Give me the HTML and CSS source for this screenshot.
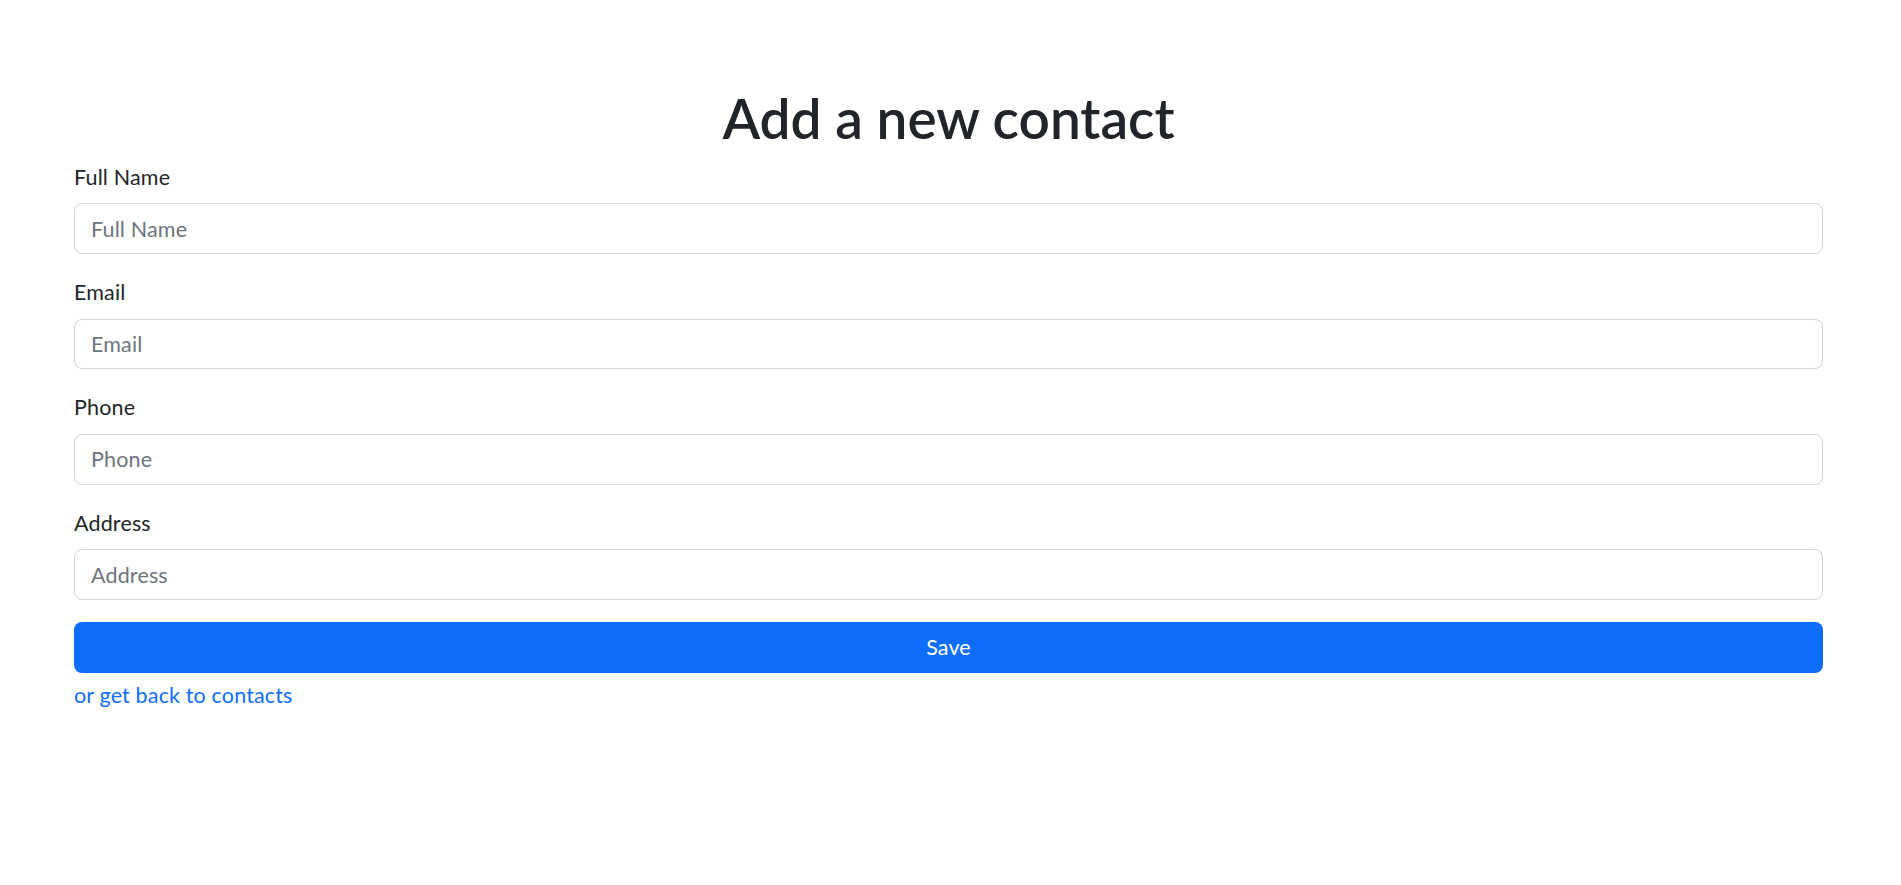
FILE: index.html
```html
<!DOCTYPE html>
<html lang="en">
<head>
<meta charset="utf-8">
<title>Add a new contact</title>
<link rel="stylesheet" href="styles.css">
</head>
<body>
<main class="page">
  <h1 class="title">Add a new contact</h1>
  <form class="form">
    <div class="group">
      <label class="label" for="name">Full Name</label>
      <input class="input" id="name" type="text" placeholder="Full Name">
    </div>
    <div class="group">
      <label class="label" for="email">Email</label>
      <input class="input" id="email" type="email" placeholder="Email">
    </div>
    <div class="group">
      <label class="label" for="phone">Phone</label>
      <input class="input" id="phone" type="text" placeholder="Phone">
    </div>
    <div class="group">
      <label class="label" for="address">Address</label>
      <input class="input" id="address" type="text" placeholder="Address">
    </div>
    <button class="btn" type="button">Save</button>
  </form>
  <a class="back" href="#">or get back to contacts</a>
</main>
</body>
</html>
```
FILE: styles.css
```css
html, body {
  margin: 0;
  padding: 0;
  background: #ffffff;
}
body {
  font-family: Lato, "Open Sans", "Liberation Sans", sans-serif;
  color: #212529;
  font-size: 21.5px;
  line-height: 1.5;
  letter-spacing: 0.15px;
}
.page {
  padding: 86px 78px 0 74px;
}
.title {
  margin: 0 0 10.67px;
  font-size: 55px;
  line-height: 64px;
  font-weight: 600;
  letter-spacing: 0;
  text-align: center;
  color: #212529;
}
.form {
  margin: 0;
}
.group {
  margin-bottom: 22px;
}
.label {
  display: block;
  font-size: 21.5px;
  line-height: 32px;
  margin-bottom: 10.67px;
}
.input {
  display: block;
  width: 100%;
  box-sizing: border-box;
  height: 50.67px;
  padding: 8px 16px;
  font-family: inherit;
  font-size: 21.5px;
  letter-spacing: 0.15px;
  color: #212529;
  border: 1px solid #ced4da;
  border-radius: 8px;
  background: #fff;
  outline: none;
}
.input::placeholder {
  color: #6c757d;
  opacity: 1;
}
.btn {
  display: block;
  width: 100%;
  height: 51px;
  padding: 0;
  border: none;
  border-radius: 8px;
  background: #0d6efd;
  color: #fff;
  font-family: inherit;
  font-size: 21.5px;
  letter-spacing: 0.15px;
  line-height: 32px;
  cursor: pointer;
}
.back {
  display: inline-block;
  margin-top: 6px;
  color: #0d6efd;
  text-decoration: none;
  font-size: 21.5px;
  line-height: 32px;
}
```
